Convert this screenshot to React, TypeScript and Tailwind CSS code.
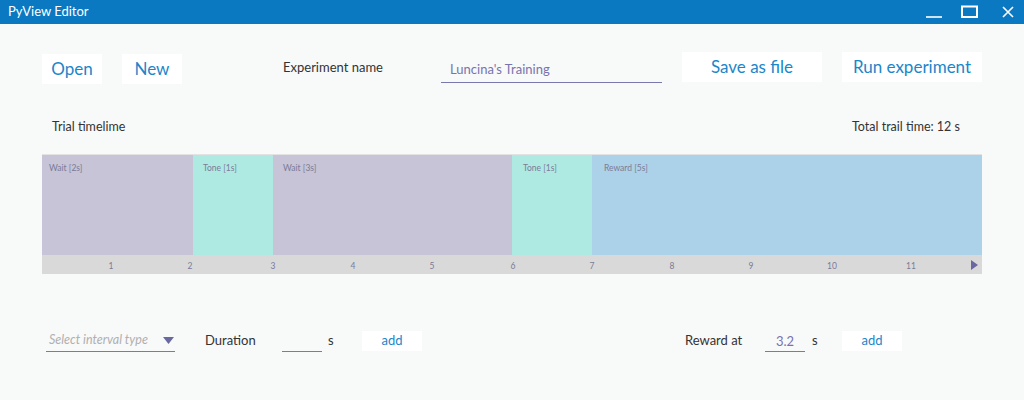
const segments = [
  { label: 'Wait [2s]', width: 151, pad: 7, color: 'bg-[#c6c4d6]' },
  { label: 'Tone [1s]', width: 80, pad: 10, color: 'bg-[#aeeae2]' },
  { label: 'Wait [3s]', width: 239, pad: 10, color: 'bg-[#c6c4d6]' },
  { label: 'Tone [1s]', width: 80, pad: 11, color: 'bg-[#aeeae2]' },
  { label: 'Reward [5s]', width: 390, pad: 12, color: 'bg-[#acd2e9]' },
]

const ticks = [
  { n: '1', x: 69 },
  { n: '2', x: 148 },
  { n: '3', x: 231 },
  { n: '4', x: 311 },
  { n: '5', x: 390 },
  { n: '6', x: 471 },
  { n: '7', x: 550 },
  { n: '8', x: 630 },
  { n: '9', x: 709 },
  { n: '10', x: 790 },
  { n: '11', x: 869 },
]

function TitleBar () {
  return (
    <div className="h-[24px] bg-[#0a79c2] flex items-center justify-between text-white">
      <div className="pl-[8px] text-[13px]">PyView Editor</div>
      <div className="flex items-center h-full">
        <svg width="18" height="14" viewBox="0 0 18 14" className="mr-[18px]">
          <line x1="1" y1="12" x2="17" y2="12" stroke="white" strokeWidth="1.6" />
        </svg>
        <svg width="18" height="14" viewBox="0 0 18 14" className="mr-[22px]">
          <rect x="1" y="1.5" width="15" height="10.5" fill="none" stroke="white" strokeWidth="2" />
        </svg>
        <svg width="14" height="14" viewBox="0 0 14 14" className="mr-[9px]">
          <path d="M2 2 L12 12 M12 2 L2 12" stroke="white" strokeWidth="1.6" />
        </svg>
      </div>
    </div>
  )
}

function Timeline () {
  return (
    <div className="w-[940px] border-t border-[#e3e3e3]">
      <div className="flex h-[100px]">
        {segments.map((s, i) => (
          <div key={i} className={`${s.color} shrink-0 pt-[7px] text-[8.5px] text-[#7b7b98] whitespace-nowrap`} style={{ width: s.width, paddingLeft: s.pad }}>
            {s.label}
          </div>
        ))}
      </div>
      <div className="relative h-[19px] bg-[#d9d9d9] text-[8.5px] text-[#7b7b98]">
        {ticks.map((t) => (
          <span key={t.n} className="absolute top-[5px] -translate-x-1/2" style={{ left: t.x }}>{t.n}</span>
        ))}
        <svg width="7" height="10" viewBox="0 0 7 10" className="absolute right-[4px] top-[5px]">
          <path d="M0 0 L7 5 L0 10 Z" fill="#6a68a0" />
        </svg>
      </div>
    </div>
  )
}

export default function App () {
  return (
    <div className="w-[1024px] h-[400px] bg-[#f8f9f9] text-[#333] overflow-hidden" style={{ fontFamily: 'Lato, "Open Sans", sans-serif' }}>
      <TitleBar />
      <div className="px-[42px]">
        <div className="flex items-center mt-[30px] h-[30px] whitespace-nowrap">
          <button className="shrink-0 w-[60px] h-[30px] bg-white text-[#1b86c9] text-[17px]">Open</button>
          <button className="shrink-0 ml-[20px] w-[60px] h-[30px] bg-white text-[#1b86c9] text-[17px]">New</button>
          <div className="shrink-0 ml-[101px] w-[97px] text-[13px] text-[#333] mb-[3px]">Experiment name</div>
          <div className="shrink-0 ml-[61px] w-[221px] h-[28px] border-b-[1.5px] border-[#7b78ad] pl-[9px] pt-[5px] text-[13px] text-[#7873ad]">
            Luncina's Training
          </div>
          <button className="shrink-0 ml-[20px] w-[140px] h-[30px] mb-[4px] bg-white text-[#1b86c9] text-[17px]">Save as file</button>
          <button className="shrink-0 ml-[20px] w-[140px] h-[30px] mb-[4px] bg-white text-[#1b86c9] text-[17px]">Run experiment</button>
        </div>
        <div className="flex items-center justify-between mt-[35px] h-[16px] pl-[10px] pr-[22px] text-[12.5px] text-[#333]">
          <div>Trial timelime</div>
          <div>Total trail time: 12 s</div>
        </div>
        <div className="mt-[19px]">
          <Timeline />
        </div>
        <div className="flex items-center mt-[56px] h-[22px] text-[13px] whitespace-nowrap">
          <div className="shrink-0 ml-[4px] w-[129px] h-[22px] border-b-[1.5px] border-[#7b78ad] flex items-center justify-between pl-[3px] pr-[1px]">
            <span className="italic text-[12.5px] text-[#b0b0b0]">Select interval type</span>
            <svg width="11" height="7" viewBox="0 0 11 7" className="mb-[1px]">
              <path d="M0 0 L11 0 L5.5 7 Z" fill="#6a68a0" />
            </svg>
          </div>
          <div className="shrink-0 ml-[30px] w-[47px]">Duration</div>
          <div className="shrink-0 ml-[30px] w-[40px] h-[22px] border-b-[1.5px] border-[#7b78ad]" />
          <div className="shrink-0 ml-[6px] w-[6px]">s</div>
          <button className="shrink-0 ml-[28px] w-[60px] h-[20px] bg-white text-[#1b86c9] text-[13px]">add</button>
          <div className="shrink-0 ml-[263px] w-[55px]">Reward at</div>
          <div className="shrink-0 ml-[25px] w-[40px] h-[22px] border-b-[1.5px] border-[#7b78ad] text-center text-[#7873ad] pt-[2px]">3.2</div>
          <div className="shrink-0 ml-[7px] w-[6px]">s</div>
          <button className="shrink-0 ml-[24px] w-[60px] h-[20px] bg-white text-[#1b86c9] text-[13px]">add</button>
        </div>
      </div>
    </div>
  )
}
